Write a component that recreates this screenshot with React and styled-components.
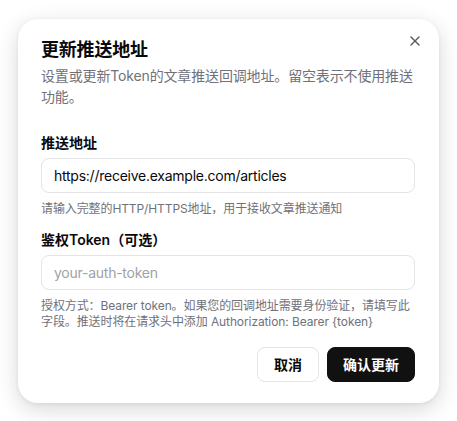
import React from 'react';
import styled, { createGlobalStyle } from 'styled-components';
import { X } from 'lucide-react';

const GlobalStyle = createGlobalStyle`
  * {
    box-sizing: border-box;
  }

  body {
    margin: 0;
    background: #ffffff;
    font-family: "Inter", "Noto Sans CJK SC", sans-serif;
    color: #09090b;
  }
`;

const Page = styled.div`
  height: 100vh;
  display: flex;
  align-items: center;
  justify-content: center;
`;

const Dialog = styled.div`
  position: relative;
  width: 421px;
  height: 384px;
  padding: 22px 24px 19px 23px;
  background: #ffffff;
  border-radius: 20px;
  box-shadow: 0 6px 22px rgba(0, 0, 0, 0.16), 0 1px 4px rgba(0, 0, 0, 0.06);
  display: flex;
  flex-direction: column;
`;

const CloseButton = styled.button`
  position: absolute;
  top: 14px;
  right: 16px;
  width: 16px;
  height: 16px;
  padding: 0;
  border: none;
  background: none;
  color: #3f3f46;
  opacity: 0.85;
  display: flex;
  cursor: pointer;
`;

const Header = styled.div`
  display: flex;
  flex-direction: column;
  gap: 6px;
`;

const Title = styled.h2`
  margin: 0;
  font-size: 18px;
  font-weight: 700;
  line-height: 1;
  letter-spacing: -0.2px;
`;

const Description = styled.p`
  margin: 0;
  font-size: 14px;
  line-height: 21px;
  letter-spacing: -0.15px;
  color: #71717a;
`;

const Form = styled.div`
  margin-top: 29px;
  display: flex;
  flex-direction: column;
  gap: 16px;
`;

const Field = styled.div`
  display: flex;
  flex-direction: column;
  gap: 8px;
`;

const Label = styled.label`
  font-size: 14px;
  font-weight: 600;
  line-height: 1;
  color: #09090b;
`;

const Input = styled.input`
  height: 35px;
  width: 100%;
  padding: 0 12px;
  border: 1px solid #e4e4e7;
  border-radius: 8px;
  font-family: inherit;
  font-size: 14px;
  letter-spacing: -0.25px;
  color: #09090b;
  background: #ffffff;
  outline: none;

  &::placeholder {
    color: #a1a1aa;
  }
`;

const Help = styled.p`
  margin: 0;
  font-size: 12px;
  line-height: 16px;
  letter-spacing: -0.1px;
  color: #71717a;
`;

const Footer = styled.div`
  margin-top: 17px;
  display: flex;
  justify-content: flex-end;
  gap: 8px;
`;

const Button = styled.button`
  height: 35px;
  padding: 0 ${({ $primary }) => ($primary ? '15px' : '16px')};
  border-radius: 8px;
  font-family: inherit;
  font-size: 14px;
  font-weight: 700;
  cursor: pointer;
  border: 1px solid ${({ $primary }) => ($primary ? '#111111' : '#e4e4e7')};
  background: ${({ $primary }) => ($primary ? '#111111' : '#ffffff')};
  color: ${({ $primary }) => ($primary ? '#ffffff' : '#09090b')};
`;

export default function App() {
  return (
    <>
      <GlobalStyle />
      <Page>
        <Dialog>
          <CloseButton aria-label="关闭">
            <X size={16} strokeWidth={2} />
          </CloseButton>
          <Header>
            <Title>更新推送地址</Title>
            <Description>
              设置或更新Token的文章推送回调地址。留空表示不使用推送功能。
            </Description>
          </Header>
          <Form>
            <Field>
              <Label>推送地址</Label>
              <Input defaultValue="https://receive.example.com/articles" />
              <Help>请输入完整的HTTP/HTTPS地址，用于接收文章推送通知</Help>
            </Field>
            <Field>
              <Label>鉴权Token（可选）</Label>
              <Input placeholder="your-auth-token" />
              <Help>
                授权方式：Bearer token。如果您的回调地址需要身份验证，请填写此字段。推送时将在请求头中添加 Authorization: Bearer {'{token}'}
              </Help>
            </Field>
          </Form>
          <Footer>
            <Button>取消</Button>
            <Button $primary>确认更新</Button>
          </Footer>
        </Dialog>
      </Page>
    </>
  );
}
